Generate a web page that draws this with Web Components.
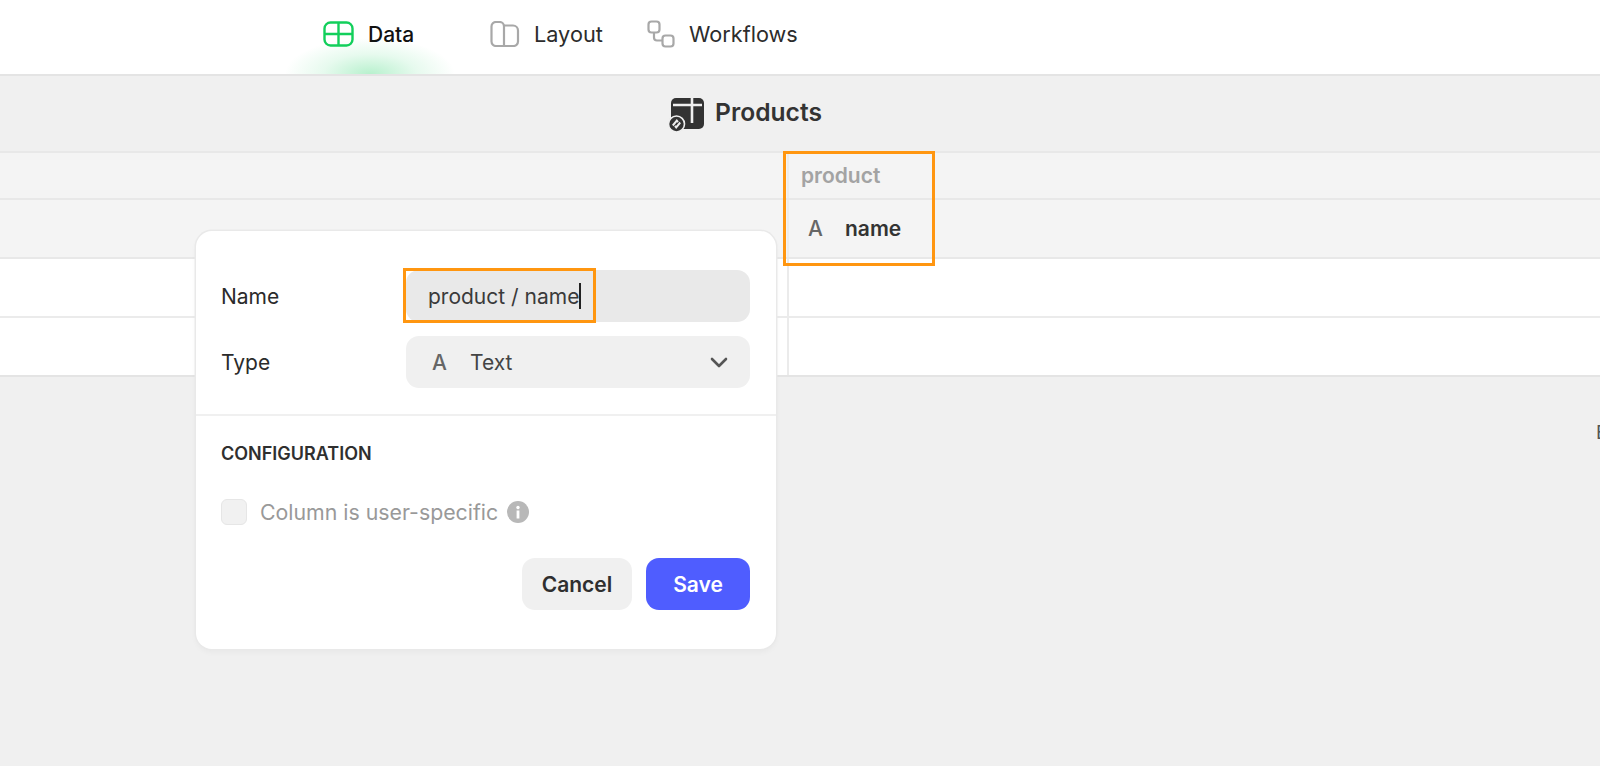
<!DOCTYPE html>
<html lang="en"><head><meta charset="utf-8"><title>Products</title>
<style>
html,body{margin:0;height:100%;}
body{font-family:Inter,"Liberation Sans",sans-serif;background:#f0f0f0;overflow:hidden;color:#2f2f2f;}
app-shell{height:766px;}
</style></head>
<body>
<app-shell>
  <top-nav>
    <nav-tab active label="Data"><svg slot="icon" width="31" height="26" viewBox="0 0 31 26" fill="none" stroke="#12cf5b" stroke-width="2.4"><rect x="1.5" y="1.5" width="28" height="23" rx="6"/><path d="M1.5 13h28M15.5 1.500v23"/></svg></nav-tab>
    <nav-tab label="Layout"><svg slot="icon" width="30" height="26" viewBox="0 0 30 26" fill="none" stroke="#a8a8a8" stroke-width="2.2"><path d="M14 4.500h9a5 5 0 0 1 5 5v11a4.500 4.500 0 0 1-4.500 4.500H6a4.500 4.500 0 0 1-4.500-4.500V5.500A4.500 4.500 0 0 1 6 1h3.500a4.500 4.500 0 0 1 4.500 4.500V25"/></svg></nav-tab>
    <nav-tab label="Workflows"><svg slot="icon" width="28" height="28" viewBox="0 0 28 28" fill="none" stroke="#a8a8a8" stroke-width="2.200"><rect x="1.500" y="1.500" width="11" height="11" rx="3"/><rect x="15.500" y="15.500" width="11" height="11" rx="3"/><path d="M7 12.500v5a3 3 0 0 0 3 3h5.500"/></svg></nav-tab>
  </top-nav>
  <sheet-title>Products</sheet-title>
  <data-grid>
    <grid-row kind="group"><span slot="col">product</span></grid-row>
    <grid-row kind="head"><span slot="col"><type-glyph></type-glyph><span>name</span></span></grid-row>
    <grid-row></grid-row>
    <grid-row last></grid-row>
  </data-grid>
  <clipped-note>E</clipped-note>
  <orange-mark style="left:783px;top:151px;width:152px;height:115px"></orange-mark>
  <column-dialog></column-dialog>
  <orange-mark style="left:403px;top:268px;width:193px;height:55px"></orange-mark>
</app-shell>
<script>
function def(name, css, html){
  customElements.define(name, class extends HTMLElement{
    connectedCallback(){
      if(this.shadowRoot) return;
      const r=this.attachShadow({mode:'open'});
      r.innerHTML='<style>'+css+'</style>'+(typeof html==='function'?html(this):html);
    }
  });
}
def('app-shell',':host{display:flex;flex-direction:column;position:relative;width:100%;overflow:hidden}','<slot></slot>');
def('top-nav',`:host{display:flex;align-items:stretch;height:74px;padding-left:323px;background:#fff;border-bottom:2px solid #e4e4e4;position:relative}`,'<slot></slot>');
def('nav-tab',`:host{display:flex;align-items:center;gap:14px;height:100%;font-size:21.700px;color:#2c2c2c;position:relative;box-sizing:border-box;padding-bottom:6px}
:host([active]){color:#111;width:167px;font-size:21px;font-weight:500}
:host([label=Layout]){width:157px}
.glow{position:absolute;left:-38px;bottom:0;width:170px;height:36px;background:radial-gradient(ellipse 50% 100% at 50% 100%,rgba(18,207,91,.3),rgba(18,207,91,.1) 55%,rgba(18,207,91,0) 100%);display:none}
:host([active]) .glow{display:block}
.i{display:flex}`,h=>`<div class="glow"></div><span class="i"><slot name="icon"></slot></span><span>${h.getAttribute('label')}</span>`);
def('sheet-title',`:host{display:flex;align-items:center;justify-content:center;gap:10px;height:75px;font-size:24.600px;font-weight:600;color:#333;border-bottom:2px solid #e8e8e8;padding-right:110px}
svg{display:block;position:relative;top:1px}
span{position:relative;top:-2px}`,`<svg width="37" height="37" viewBox="0 0 37 37"><rect x="3" y="2" width="33" height="31" rx="5" fill="#333"/><path d="M5 9h29M24 2v25" stroke="#efefef" stroke-width="2.600" fill="none"/><circle cx="8.500" cy="28" r="8" fill="#333" stroke="#efefef" stroke-width="1.600"/><path d="M4.800 29.500l4-4.800 1.200 1.500M12.200 26.500l-4 4.800-1.200-1.500" stroke="#efefef" stroke-width="2" fill="none"/></svg><span><slot></slot></span>`);
def('data-grid',`:host{display:flex;flex-direction:column}`,'<slot></slot>');
def('grid-row',`:host{display:grid;grid-template-columns:789px 1fr;background:#fff;height:57px;border-bottom:2px solid #ebebeb;font-size:21px}
:host([kind=group]){height:45px;background:#f4f4f4;color:#a3a3a3;font-weight:600;border-bottom:2px solid #e8e8e8}
:host([kind=head]){height:57px;background:#f4f4f4;font-weight:600;color:#333;border-bottom:2px solid #e8e8e8}
:host([last]){border-bottom-color:#e4e4e4}
.col{border-left:2px solid #ebebeb;display:flex;align-items:center;padding-left:12px;margin-left:-2px}
:host([kind=group]) .col,:host([kind=head]) .col{border-left-color:#ececec}`,'<div></div><div class="col"><slot name="col"></slot></div>');
def('type-glyph',`:host{display:inline-block;font-size:21px;font-weight:500;color:#666;width:44px;padding-left:7px;box-sizing:border-box}`,'A');
def('orange-mark',`:host{display:block;position:absolute;border:3.500px solid #ff9610;box-sizing:border-box;pointer-events:none}`,'');
def('clipped-note',`:host{position:absolute;left:1596px;top:421px;font-size:19px;color:#555}`,'<slot></slot>');
def('field-row',`:host{display:grid;grid-template-columns:185px 1fr;align-items:center;font-size:21px;color:#2b2b2b;height:52px}`,'<span><slot name="label"></slot></span><slot></slot>');
def('ui-button',`:host{display:flex;align-items:center;justify-content:center;height:52px;border-radius:13px;font-size:21px;font-weight:600;background:#f0f0f0;color:#2f2f2f;box-sizing:border-box}
:host([primary]){background:#4f5dff;color:#fff}`,'<slot></slot>');
def('column-dialog',`:host{position:absolute;left:196px;top:231px;width:580px;height:418px;background:#fff;border-radius:16px;box-shadow:0 0 0 1.500px #e9e9e9,0 3px 6px rgba(0,0,0,.04);box-sizing:border-box;display:flex;flex-direction:column;color:#2b2b2b}
.top{padding:39px 26px 0 25px;display:flex;flex-direction:column;gap:14px;height:185px;box-sizing:border-box;border-bottom:2px solid #f0f0f0}
.box{height:52px;border-radius:13px;display:flex;align-items:center;padding-left:22px;box-sizing:border-box}
.inp{background:#e9e9e9;color:#3a3a3a}
.caret{display:inline-block;width:1.500px;height:26px;background:#222}
.sel{background:#f0f0f0;color:#444}
.sel .a{width:42px;font-size:21px;font-weight:500;color:#666;padding-left:4px;box-sizing:border-box}
.sel svg{margin-left:auto;margin-right:22px}
.cfg{padding:27px 25px 0;font-size:18px;font-weight:600;color:#2f2f2f;line-height:22px}
.chk{margin:34px 25px 0;display:flex;align-items:center;gap:13px;color:#999;font-size:21.300px;height:26px}
.cb{width:26px;height:26px;box-sizing:border-box;background:#f1f1f1;border:1.500px solid #e6e6e6;border-radius:6px}
.info{width:22px;height:22px;border-radius:50%;background:#b8b8b8;display:flex;margin-left:-4px}
.acts{margin:33px 26px 0;display:grid;grid-template-columns:110px 104px;gap:14px;justify-content:end}`,
`<div class="top">
<field-row><span slot="label">Name</span><div class="box inp"><span>product / name</span><span class="caret"></span></div></field-row>
<field-row><span slot="label">Type</span><div class="box sel"><span class="a">A</span><span>Text</span><svg width="18" height="11" viewBox="0 0 18 11" fill="none" stroke="#555" stroke-width="2.600" stroke-linecap="round" stroke-linejoin="round"><path d="M2 2l7 7 7-7"/></svg></div></field-row>
</div>
<div class="cfg">CONFIGURATION</div>
<div class="chk"><span class="cb"></span><span>Column is user-specific</span><span class="info"><svg width="22" height="22" viewBox="0 0 22 22"><circle cx="11" cy="6.500" r="1.700" fill="#fff"/><rect x="9.600" y="9.500" width="2.800" height="8" fill="#fff"/></svg></span></div>
<div class="acts"><ui-button>Cancel</ui-button><ui-button primary>Save</ui-button></div>`);
</script>
</body></html>
